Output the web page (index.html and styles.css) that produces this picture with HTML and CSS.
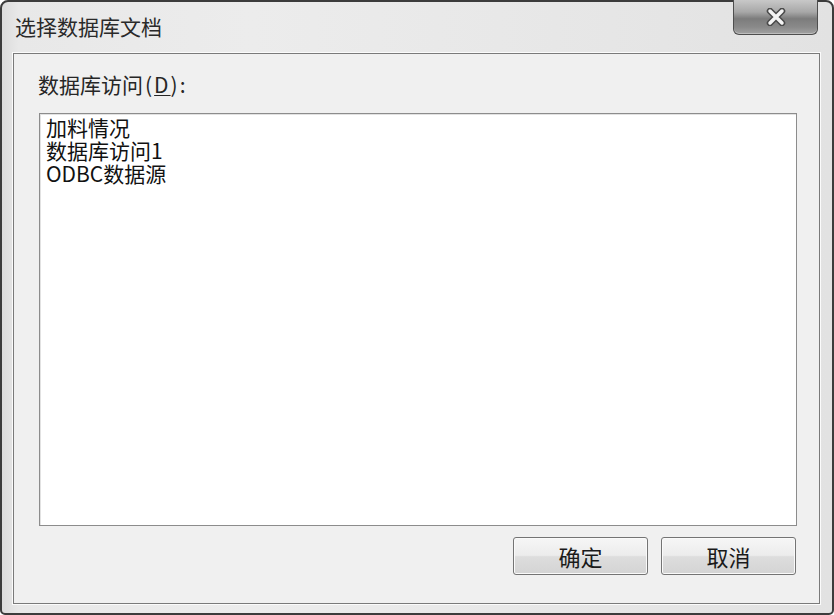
FILE: index.html
```html
<!DOCTYPE html>
<html lang="zh-CN">
<head>
    <meta charset="UTF-8">
    <title>选择数据库文档</title>
    <link rel="stylesheet" href="styles.css">
</head>
<body>
    <div class="window">
        <div class="titlebar">
            <span class="title">选择数据库文档</span>
            <button class="close-btn" aria-label="关闭">
                <svg width="20" height="18" viewBox="0 0 20 18">
                    <path d="M4 3 L16 15 M16 3 L4 15" stroke="#4a4a4a" stroke-width="6.5" stroke-linecap="round"/>
                    <path d="M4 3 L16 15 M16 3 L4 15" stroke="#f4f4f4" stroke-width="3.5" stroke-linecap="round"/>
                </svg>
            </button>
        </div>

        <div class="client">
            <label class="field-label">数据库访问<span class="accel">(<u>D</u>):</span></label>
            <ul class="listbox">
                <li>加料情况</li>
                <li>数据库访问1</li>
                <li>ODBC数据源</li>
            </ul>
            <div class="actions">
                <button class="btn">确定</button>
                <button class="btn">取消</button>
            </div>
        </div>
    </div>
</body>
</html>
```

FILE: styles.css
```css
body {
    margin: 0;
    padding: 0;
    background: #ffffff;
    font-family: "Noto Sans CJK SC", "Liberation Sans", sans-serif;
    color: #1e1e1e;
}

.window {
    position: relative;
    width: 834px;
    height: 615px;
    box-sizing: border-box;
    border: 2px solid #3c3c3c;
    border-radius: 8px 8px 5px 5px;
    background: linear-gradient(90deg, #dcdcdc 0%, #e8e8e8 2%, #ececec 30%, #e8e8e8 60%, #e2e2e2 100%);
    padding: 0 12px 9px 11px;
    display: flex;
    flex-direction: column;
}

.titlebar {
    height: 51px;
    display: flex;
    align-items: center;
    padding-left: 2px;
    padding-bottom: 4px;
    box-sizing: border-box;
}

.title {
    font-size: 21px;
    color: #2a2a2a;
}

.close-btn {
    position: absolute;
    top: -2px;
    right: 14px;
    width: 85px;
    height: 35px;
    border: 1px solid #4e4e4e;
    border-top: none;
    border-radius: 0 0 6px 6px;
    background: linear-gradient(180deg, #c8c8c8 0%, #a8a8a8 35%, #7c7c7c 55%, #8a8a8a 80%, #a2a2a2 100%);
    box-shadow: inset 0 -1px 0 #bdbdbd;
    display: flex;
    align-items: center;
    justify-content: center;
    padding: 0;
}

.client {
    flex: 1;
    background: #f0f0f0;
    border: 1px solid #7a7a7a;
    box-shadow: 0 0 0 1px #fbfbfb;
    padding: 17px 22px 24px 25px;
    display: flex;
    flex-direction: column;
}

.field-label {
    font-size: 21px;
    line-height: 26px;
    color: #262626;
    margin-left: -1px;
}

.accel {
    letter-spacing: 2px;
    margin-left: 2px;
}

.field-label u {
    text-decoration-thickness: 1px;
    text-underline-offset: 2px;
}

.listbox {
    list-style: none;
    margin: 16px 0 0 0;
    padding: 2px 6px;
    height: 413px;
    box-sizing: border-box;
    background: #ffffff;
    border: 1px solid #8c8c8c;
    box-shadow: inset 1px 1px 0 #e2e2e2;
}

.listbox li {
    font-size: 21px;
    line-height: 23px;
    color: #111111;
}

.actions {
    display: flex;
    justify-content: flex-end;
    gap: 13px;
    margin-top: 11px;
    padding-right: 1px;
}

.btn {
    width: 135px;
    height: 38px;
    font-family: "Noto Sans CJK SC", sans-serif;
    font-size: 22px;
    color: #1a1a1a;
    border: 1px solid #747474;
    border-radius: 3px;
    background: linear-gradient(180deg, #f6f6f6 0%, #ececec 48%, #dddddd 52%, #d4d4d4 100%);
    box-shadow: inset 0 0 0 1px #fafafa;
    padding: 0;
    display: flex;
    align-items: center;
    justify-content: center;
}
```
